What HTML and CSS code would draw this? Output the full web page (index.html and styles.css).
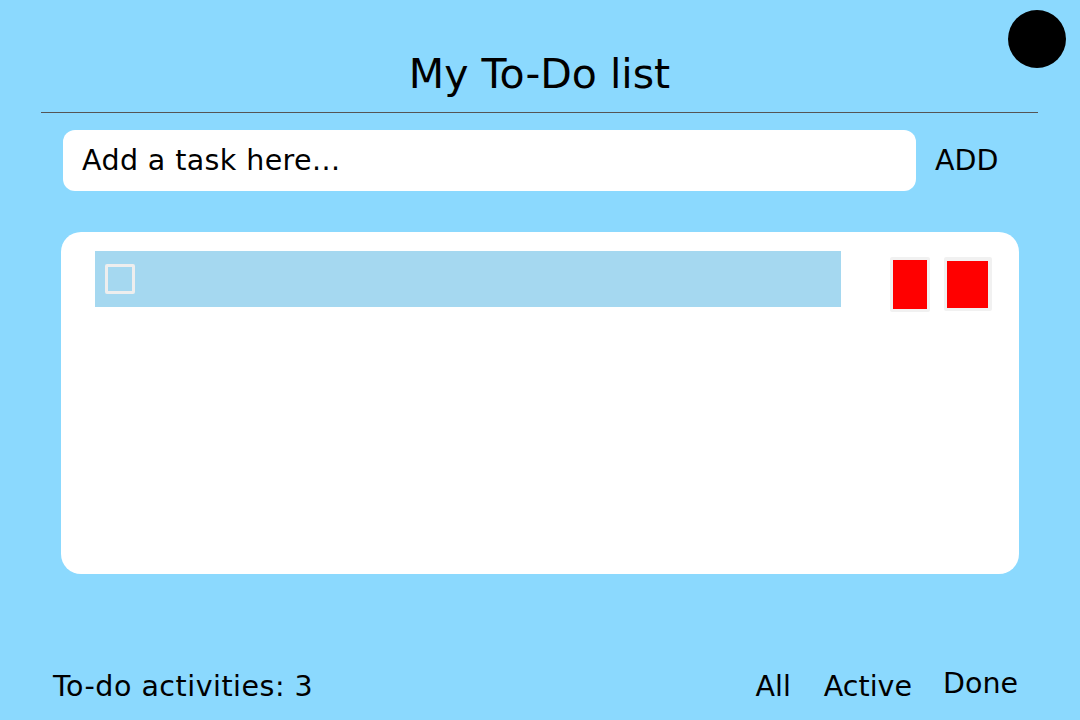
FILE: index.html
```html
<!DOCTYPE html>
<html>
<head>
<meta charset="utf-8">
<link rel="stylesheet" href="styles.css">
</head>
<body>
<div class="app">
  <div class="avatar"></div>
  <header class="header">
    <h1 class="title">My To-Do list</h1>
  </header>
  <div class="add-row">
    <div class="task-input">Add a task here...</div>
    <div class="add-btn">ADD</div>
  </div>
  <div class="card">
    <div class="item">
      <div class="item-bar"><span class="check"></span></div>
      <div class="actions">
        <span class="btn btn-narrow"></span>
        <span class="btn btn-wide"></span>
      </div>
    </div>
  </div>
  <footer class="footer">
    <div class="count">To-do activities: 3</div>
    <nav class="filters">
      <span class="f f-all">All</span>
      <span class="f f-active">Active</span>
      <span class="f f-done">Done</span>
    </nav>
  </footer>
</div>
</body>
</html>
```
FILE: styles.css
```css
html, body {
  margin: 0;
  padding: 0;
}
body {
  background: #8bd9fe;
  font-family: "DejaVu Sans", Verdana, sans-serif;
  color: #000;
  width: 1080px;
  height: 720px;
  overflow: hidden;
}
.app {
  position: relative;
  width: 1080px;
  height: 720px;
  display: flex;
  flex-direction: column;
}
.avatar {
  position: absolute;
  top: 10px;
  left: 1008px;
  width: 58px;
  height: 58px;
  border-radius: 50%;
  background: #000;
}
.header {
  margin: 0 42px 0 41px;
  border-bottom: 1px solid #555;
  height: 112px;
  display: flex;
  justify-content: center;
}
.title {
  margin: 50px 0 0 0;
  font-size: 41px;
  font-weight: normal;
  line-height: 48px;
}
.add-row {
  display: flex;
  align-items: center;
  margin: 17px 0 0 63px;
  height: 61px;
}
.task-input {
  width: 853px;
  height: 61px;
  box-sizing: border-box;
  background: #fff;
  border-radius: 12px;
  font-size: 28.5px;
  letter-spacing: 0.4px;
  line-height: 62px;
  padding-left: 19px;
}
.add-btn {
  margin-left: 19px;
  font-size: 28.5px;
  line-height: 62px;
}
.card {
  margin: 41px 0 0 61px;
  width: 958px;
  height: 342px;
  background: #fff;
  border-radius: 20px;
  box-sizing: border-box;
  padding: 19px 0 0 34px;
}
.item {
  display: flex;
  align-items: flex-start;
}
.item-bar {
  width: 746px;
  height: 56px;
  background: #a5d8f0;
  display: flex;
  align-items: center;
  padding-left: 10px;
  box-sizing: border-box;
}
.check {
  width: 30px;
  height: 30px;
  box-sizing: border-box;
  border: 3px solid #eeeeee;
  border-radius: 2px;
}
.actions {
  display: flex;
  margin-left: 49px;
  gap: 14px;
  margin-top: 6px;
}
.btn {
  display: block;
  background: #ff0000;
  border: 3px solid #f1f1f1;
  border-radius: 2px;
  box-sizing: border-box;
}
.btn-narrow {
  width: 40px;
  height: 55px;
}
.btn-wide {
  width: 48px;
  height: 54px;
  border-width: 4px 4px 3px 3px;
}
.footer {
  display: flex;
  justify-content: space-between;
  align-items: flex-end;
  margin: 94px 62px 0 53px;
}
.count {
  font-size: 28.5px;
  letter-spacing: 0.5px;
  line-height: 32px;
}
.filters {
  display: flex;
  font-size: 28.5px;
  line-height: 32px;
}
.f-all { margin-top: 3px; }
.f-active { margin-left: 33px; margin-top: 3px; }
.f-done { margin-left: 31px; }
```
